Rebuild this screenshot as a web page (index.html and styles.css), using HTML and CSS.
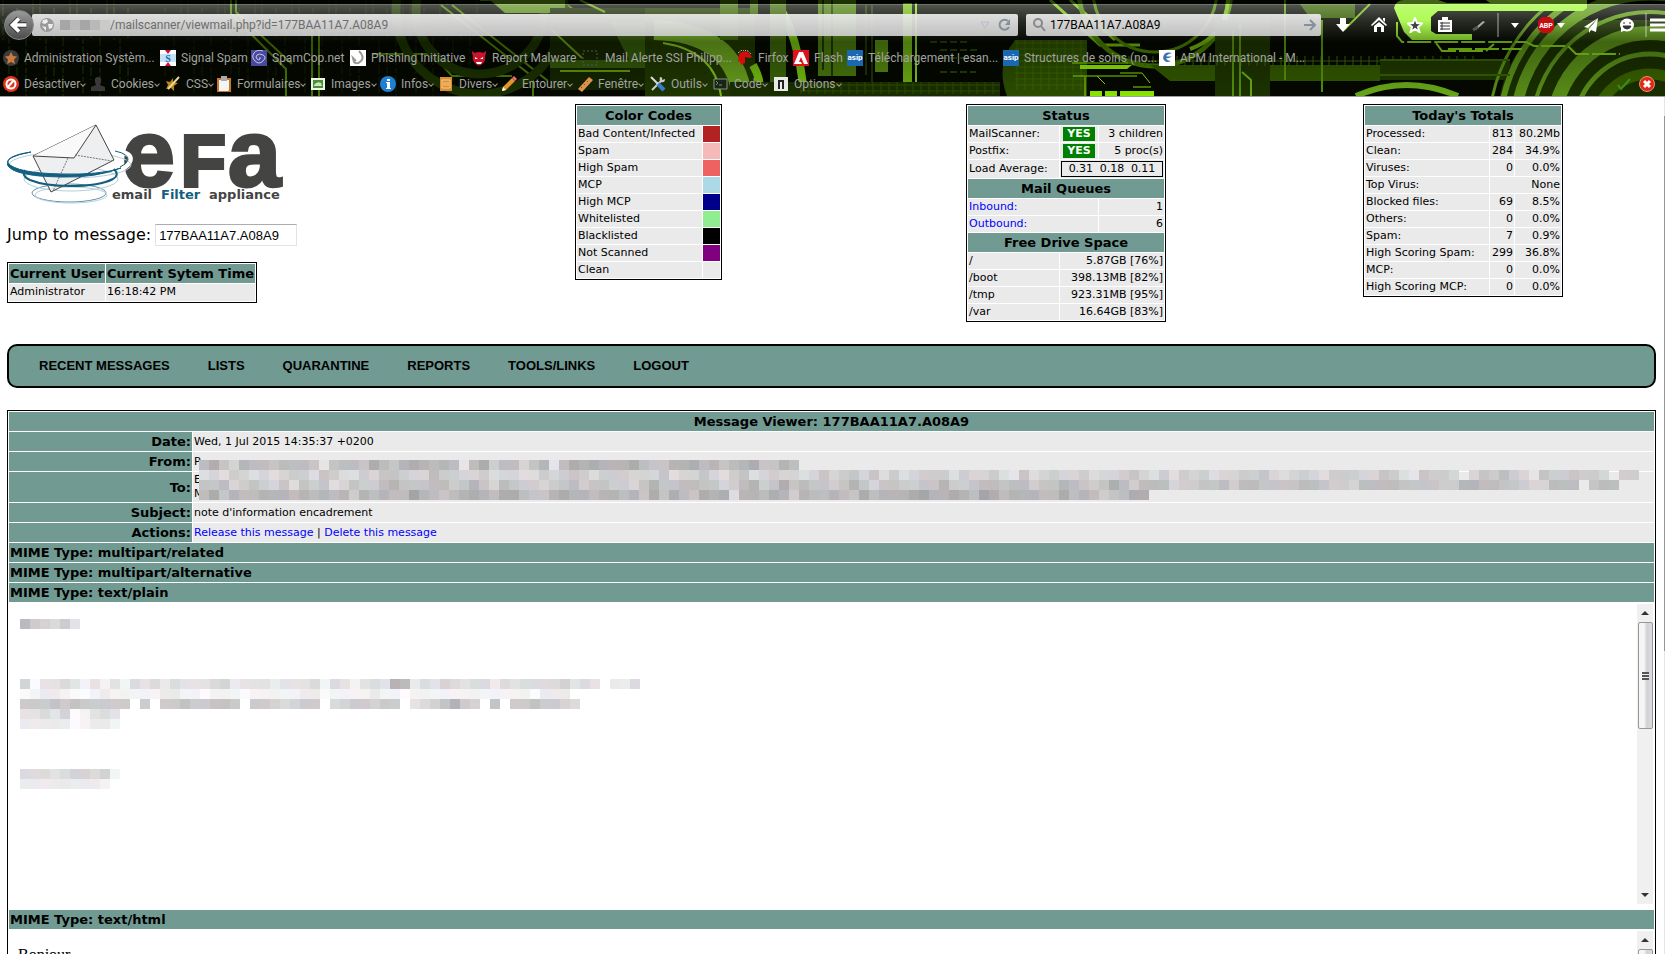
FILE: index.html
```html
<!DOCTYPE html>
<html lang="en">
<head>
<meta charset="utf-8">
<title>MailWatch - Message Viewer</title>
<link rel="stylesheet" href="styles.css">
</head>
<body>
<header class="browser">
  <svg class="theme" viewBox="0 0 1665 96" preserveAspectRatio="xMaxYMin slice" aria-hidden="true">
    <defs>
      <pattern id="rain" width="37" height="96" patternUnits="userSpaceOnUse"><path d="M3 0v40M9 20v76M17 8v30M17 60v20M26 30v66M33 0v22" stroke="#2c5000" stroke-dasharray="5 2 9 3"/></pattern>
      <pattern id="mesh" width="8" height="6" patternUnits="userSpaceOnUse"><path d="M0 1h8M1 0v6" stroke="#3e6c00"/></pattern>
    </defs>
    <rect width="1665" height="96" fill="#050900"/>
    <rect width="130" height="96" fill="url(#rain)" opacity=".7"/>
    <rect x="160" width="320" height="96" fill="url(#rain)" opacity=".35"/>
    <g fill="none" stroke="#4d8200" stroke-width="2">
      <path d="M231 0v14l55 55v27M236 0v12l56 52M312 30v66M319 30v66M441 5l92 72v19M452 5l96 76M480 0h80l20 14v20M372 54h60l20 22h60"/>
    </g>
    <g fill="none" stroke="#1c3400" stroke-width="9"><circle cx="480" cy="10" r="64"/><circle cx="480" cy="10" r="84"/></g>
    <path d="M490 0h75v13h-60z" fill="#5c8f1c"/>
    <path d="M550 8h95v82h-95z" fill="#162800"/>
    <path d="M550 60h180v8H550zM610 22h50v44h-28z" fill="#37600a"/>
    <path d="M645 8h110v88H645z" fill="#213b00"/>
    <path d="M552 30l30 28M560 71h70M580 0l25 12" stroke="#6ba30c" fill="none" stroke-width="2"/>
    <path d="M654 30q80 2 88 66" stroke="#71ad1f" stroke-width="20" fill="none"/>
    <path d="M663 43q52 8 58 53" stroke="#8bd01b" stroke-width="2" fill="none"/>
    <path d="M753 65q8 14 8 31M775 0q24 34 29 96" stroke="#7ccb10" stroke-width="8" fill="none"/>
    <path d="M750 0h8v14h-8zM720 0h18v40h-18zM770 0h16v96h-16z" fill="#3f6b08"/>
    <path d="M818 0h38v76h-38z" fill="#4d7f0d"/>
    <path d="M875 40h13v32h-13z" fill="#5a910e"/>
    <path d="M823 0v70M832 0v76M866 5v70M872 5v85" stroke="#203800" stroke-width="2"/>
    <path d="M903 3h9v93h-9z" fill="#76ba14"/><path d="M916 3v93" stroke="#8cdc1a" stroke-width="2"/>
    <path d="M935 35h45M930 42h40M940 50h38M940 58h30M940 72h36" stroke="#4a7b0a" stroke-dasharray="7 3"/>
    <rect x="730" y="82" width="270" height="14" fill="#1c3300"/><rect x="800" y="82" width="200" height="12" fill="url(#mesh)" opacity=".6"/>
    <path d="M1015 40q-20 25-8 56h80V40z" fill="#2f5400"/><rect x="1015" y="40" width="70" height="50" fill="url(#mesh)"/>
    <path d="M1050 0l50 45h40M1070 0l45 40" stroke="#79c50c" fill="none" stroke-width="3"/>
    <g fill="none" stroke="#4b8400"><circle cx="1155" cy="-10" r="76" stroke-width="5"/><circle cx="1155" cy="-10" r="62" stroke-width="3"/><path d="M1228 0q-2 36-38 49" stroke="#76bf0d" stroke-width="4"/></g>
    <path d="M1150 65h230v16h-210zM1300 4h55v14h-45z" fill="#365f00"/>
    <path d="M1215 20h55v76h-55z" fill="#1f3800"/>
    <path d="M1106 56h370v10h-330z" fill="url(#mesh)"/>
    <path d="M1233 30v66M1240 22v74M1322 20v72M1285 0v80" stroke="#5d9d0c" stroke-width="2"/>
    <path d="M1242 72l9 8v16M1370 4l-26 26" stroke="#74b911" fill="none" stroke-width="2"/>
    <path d="M1080 65h52l-5 4h-47zM1090 91h12v5h-12zM1105 91h12v5h-12zM1120 91h34v5h-34z" fill="#9f0"/>
    <path d="M1072 63h56M1073 76h64M1085 77v19M1120 73l22 0 8 10M1097 76l8 8M1133 87h18" stroke="#9f0" fill="none"/>
    <path d="M1380 60h130v20h-130z" fill="#223d00"/>
    <path d="M1356 96q50-22 102 0" stroke="#71b81a" stroke-width="6" fill="none"/>
    <path d="M1500 96q10-60 70-76h95v76z" fill="#1c3400"/>
    <g fill="none" stroke="#619b1a"><circle cx="1650" cy="130" r="161" stroke-width="3"/><circle cx="1650" cy="130" r="150" stroke-width="6"/><circle cx="1650" cy="130" r="135" stroke-width="11"/><circle cx="1650" cy="130" r="118" stroke-width="4"/><circle cx="1650" cy="130" r="97" stroke-width="14"/><circle cx="1650" cy="130" r="76" stroke-width="5"/><circle cx="1650" cy="130" r="56" stroke-width="11" stroke="#3d6900"/></g>
    <path d="M1394 8q2-8 10-8h34l9 3h43l-4-3h101v8l-4 3h-145l-7 6v14l5 3h36v6h-60l-8-8z" fill="#a2fa38"/>
    <path d="M1397 22v14l5 6h124l8 4h34l8 8h44M1436 43l6 8h44l8-7M1448 49h74" stroke="#8fdf17" fill="none" stroke-width="2" stroke-dasharray="24 3"/>
    <path d="M1380 60h130M1380 75h130" stroke="#3b6700" stroke-width="2"/>
  </svg>
  <div class="browser-inner">
    <div class="address-row">
      <button class="back" aria-label="Back"><svg viewBox="0 0 30 30"><path d="M15 8l-7 7 7 7M9 15h14" fill="none" stroke="#333" stroke-width="6"/><path d="M15 8l-7 7 7 7M9 15h14" fill="none" stroke="#fff" stroke-width="4"/></svg></button>
      <label class="field url">
        <svg class="i14" viewBox="0 0 14 14"><circle cx="7" cy="7" r="7" fill="#999"/><path d="M3 2l4-1 1 3-3 2-3-1zM8 6l5 0-1 4-3 1zM2 8l4 1 0 4z" fill="#eee"/></svg>
        <svg class="host" viewBox="0 0 50 10"><path fill="#b9b9b9" d="M0 0h50v10H0z"/><path fill="#a6a6a6" d="M0 0h10v10H0zM20 0h10v10H20z"/><path fill="#cacaca" d="M40 0h10v10H40z"/></svg>
        <input value="/mailscanner/viewmail.php?id=177BAA11A7.A08A9" aria-label="Address">
        <svg class="i14" viewBox="0 0 14 14"><path d="M3 4h8l-4 6z" fill="none" stroke="#b5bccb"/></svg>
        <svg class="i14" viewBox="0 0 14 14"><path d="M11 9a5 5 0 1 1-1-6" fill="none" stroke="#84909a" stroke-width="2"/><path d="M12 1v6H7z" fill="#84909a"/></svg>
      </label>
      <label class="field search">
        <svg class="i14" viewBox="0 0 14 14"><circle cx="6" cy="5" r="4" fill="none" stroke="#888" stroke-width="2"/><path d="M9 8l4 5" stroke="#888" stroke-width="2"/></svg>
        <input value="177BAA11A7.A08A9" aria-label="Search">
        <svg class="i14" viewBox="0 0 14 14"><path d="M1 7h10M7 2l5 5-5 5" fill="none" stroke="#84909a" stroke-width="2"/></svg>
      </label>
      <nav class="tools" aria-label="Toolbar">
        <button aria-label="Downloads"><svg viewBox="0 0 16 16"><path d="M5 1h6v6h4l-7 8-7-8h4z" fill="#fff"/></svg></button>
        <button class="home" aria-label="Home"><svg viewBox="0 0 16 16"><path d="M8 0l8 8-1 1-7-6-7 6-1-1zM8 5l5 4v6H10v-5H6v5H3V9zM12 1h2v4l-2-2z" fill="#fff"/></svg></button>
        <button class="star" aria-label="Bookmark"><svg viewBox="0 0 16 16"><path d="M8 1l2 5 5 .5-4 3.500 1.500 5L8 12l-4.500 3 1.500-5-4-3.500L6 6z" fill="#444" stroke="#fff" stroke-width="2"/></svg></button>
        <button aria-label="Bookmark list"><svg viewBox="0 0 16 16"><path d="M5 0h6v3h4v12H1V3h4z" fill="#fff"/><path d="M3 6h10M3 9h10M3 12h10M5 5v8" stroke="#333"/></svg></button>
        <button class="pen" aria-label="Edit"><svg viewBox="0 0 16 16"><path d="M3 12L12 4l2 1-9 8z" fill="#aaa"/><path d="M2 13l5-3" stroke="#555" stroke-width="3"/></svg></button>
        <span class="rule"></span>
        <button class="caret" aria-label="More"><svg viewBox="0 0 8 8"><path d="M0 2h8L4 7z" fill="#fff"/></svg></button>
        <button class="abp" aria-label="Adblock"><svg viewBox="0 0 18 18"><path d="M5 1h8l4 4v8l-4 4H5l-4-4V5z" fill="#c70d12"/><text x="9" y="12" text-anchor="middle" class="abp-text">ABP</text></svg></button>
        <button class="caret near" aria-label="Adblock menu"><svg viewBox="0 0 8 8"><path d="M0 2h8L4 7z" fill="#fff"/></svg></button>
        <button class="send" aria-label="Send"><svg viewBox="0 0 16 16"><path d="M15 1L1 10l4 1zM15 1L6 12v4l2-3 5 2z" fill="#fff"/></svg></button>
        <button class="chat" aria-label="Chat"><svg viewBox="0 0 16 16"><ellipse cx="8" cy="8" rx="7" ry="6.500" fill="#fff"/><path d="M2 10v5l5-2z" fill="#fff"/><path d="M5 5v2M11 5v2M4 9h8q-1 3-4 3t-4-3z" fill="#333" stroke="#333"/></svg></button>
        <span class="rule"></span>
        <button aria-label="Menu"><svg viewBox="0 0 16 16"><path d="M1 3h15M1 8h15M1 13h15" stroke="#fff" stroke-width="3"/></svg></button>
      </nav>
    </div>
    <nav class="bar bookmarks" aria-label="Bookmarks">
      <a href="#"><svg viewBox="0 0 16 16"><circle cx="8" cy="8" r="8" fill="#3b3b3b"/><path d="M8 2l2 4 4 .5-3 3 1 4.500-4-2-4 2 1-4.500-3-3L6 6z" fill="#c77b3c"/></svg>Administration Systèm...</a>
      <a href="#"><svg viewBox="0 0 16 16"><path fill="#fff" d="M0 0h16v16H0z"/><path d="M0 4h16v8H0z" fill="#c4e2f4"/><path d="M5 0h6L8 4zM5 16h6l-3-4z" fill="#cc1040"/><text x="8" y="12" text-anchor="middle" class="s-text">S</text></svg>Signal Spam</a>
      <a href="#"><svg viewBox="0 0 16 16"><path fill="#4a4a9c" d="M0 0h16v16H0z"/><path d="M8 8q2-1 1 1t-3 0 0-4 6 0 0 6-8 0-1-8 9-2" fill="none" stroke="#c5c5f2"/></svg>SpamCop.net</a>
      <a href="#"><svg viewBox="0 0 16 16"><path fill="#fff" d="M0 0h16v16H0z"/><path d="M9 1q6 6 2 10T4 12l-1-4 3 3" fill="none" stroke="#999" stroke-width="2"/></svg>Phishing Initiative</a>
      <a href="#"><svg viewBox="0 0 16 16"><path d="M1 1l3 2q4-2 8 0l3-2q0 4-1 5 1 5-3 8-3 3-6 0-4-3-3-8-1-1-1-5z" fill="#c8142c"/><path d="M4 7l3 2H4zM12 7L9 9h3zM5 12h6l-1 2H6z" fill="#fff"/></svg>Report Malware</a>
      <a href="#"><svg viewBox="0 0 16 16"><path fill="none" stroke="#555" stroke-dasharray="2 2" d="M1 1h14v14H1z"/></svg><span class="indent">Mail Alerte SSI Philipp...</span></a>
      <a href="#"><svg viewBox="0 0 16 16"><path d="M2 4q5-5 10-1l3 4-3 1-4-1v6l-4 2-1-4-2 1z" fill="#d40c0c"/><path d="M1 3l4-3 6 1 3 3" fill="none" stroke="#ddd" stroke-dasharray="1 1"/></svg>Firfox</a>
      <a href="#"><svg viewBox="0 0 16 16"><path fill="#e1121c" d="M0 0h16v16H0z"/><path d="M6 2h4l5 12h-4L8 7l-2 5h2l1 2H1z" fill="#fff"/></svg>Flash</a>
      <a href="#"><svg viewBox="0 0 16 16"><path fill="#1a67b2" d="M0 0h16v16H0z"/><text x="8" y="10" text-anchor="middle" class="asip-text">asip</text></svg>Téléchargement | esan...</a>
      <a href="#"><svg viewBox="0 0 16 16"><path fill="#1a67b2" d="M0 0h16v16H0z"/><text x="8" y="10" text-anchor="middle" class="asip-text">asip</text></svg>Structures de soins (no...</a>
      <a href="#"><svg viewBox="0 0 16 16"><path fill="#fff" d="M0 0h16v16H0z"/><path d="M13 3Q5 1 4 8q2 6 8 3-4 0-5-3 3 1 6-2-3 1-6 0 2-2 6-3z" fill="#3f6fae"/></svg>APM International - M...</a>
    </nav>
    <div class="bar-line">
      <nav class="bar developer" aria-label="Developer">
        <a href="#"><svg viewBox="0 0 16 16"><circle cx="8" cy="8" r="8" fill="#e0341c"/><circle cx="8" cy="8" r="4.500" fill="none" stroke="#fff" stroke-width="2"/><path d="M11 4l-7 8" stroke="#fff" stroke-width="2"/></svg>Désactiver<i></i></a>
        <a href="#"><svg viewBox="0 0 16 16"><path d="M8 1q4 0 3 5l-1 3 5 2v4H1v-4l5-2-1-3q-1-5 3-5z" fill="#383838"/></svg>Cookies<i></i></a>
        <a href="#"><svg viewBox="0 0 16 16"><path d="M1 5l4 1 3-4 0 4 5 1-4 3 0 5-3-3-5 1 2-4z" fill="#b98518"/><path d="M14 1L3 13" stroke="#e8d8a0" stroke-width="2"/></svg>CSS<i></i></a>
        <a href="#"><svg viewBox="0 0 16 16"><path fill="#c8762e" d="M1 2h14v14H1z"/><path fill="#f5f5f5" d="M3 4h10v10l-1 1H3z"/><path fill="#aaa" d="M5 0h6v5H5z"/></svg>Formulaires<i></i></a>
        <a href="#"><svg viewBox="0 0 16 16"><path fill="#eef5e6" d="M1 2h14v12H1z"/><path fill="#4d8f38" d="M3 4h10v8H3z"/><path d="M4 9q3-4 7-2l1 3H4z" fill="#cde3ba"/></svg>Images<i></i></a>
        <a href="#"><svg viewBox="0 0 16 16"><circle cx="8" cy="8" r="8" fill="#1e7fd4"/><path d="M7 3h3v2H7zM6 6h4v6h1v1H6v-1h1V7H6z" fill="#fff"/></svg>Infos<i></i></a>
        <a href="#"><svg viewBox="0 0 16 16"><path fill="#d98c31" d="M2 1h12v14H2z"/><path fill="none" stroke="#f8cf8a" d="M4 4h8v8H4zM5 7h6M5 9h6"/></svg>Divers<i></i></a>
        <a href="#"><svg viewBox="0 0 16 16"><path d="M2 11L11 2l3 3-9 9-4 1z" fill="#e6932f"/><path d="M11 2l2-2 3 3-2 2z" fill="#e76b68"/><path d="M2 11l3 3-4 1z" fill="#fff"/></svg>Entourer<i></i></a>
        <a href="#"><svg viewBox="0 0 16 16"><path d="M1 13L12 1l4 3L5 16z" fill="#db934c"/><path d="M4 11l1 1M7 8l1 1M10 5l1 1" stroke="#885020"/></svg>Fenêtre<i></i></a>
        <a href="#"><svg viewBox="0 0 16 16"><path d="M2 14L12 4" stroke="#ccc" stroke-width="2"/><path d="M10 1q3 0 2 3l3-1q0 4-4 3-2-1-1-5z" fill="#ccc"/><path d="M1 1l7 7" stroke="#ddd" stroke-width="2"/><path d="M8 8l6 6" stroke="#397bd0" stroke-width="4"/></svg>Outils<i></i></a>
        <a href="#"><svg viewBox="0 0 16 16"><path fill="#1a221a" stroke="#889088" d="M1 3h13v10H1z"/><path d="M3 5l2 2-2 2M6 9h3" stroke="#5aa05a" fill="none"/></svg>Code<i></i></a>
        <a href="#"><svg viewBox="0 0 16 16"><path fill="#e8e8e8" d="M1 1h14v14H1z"/><path fill="#222" d="M5 4h6v9H5z"/><path fill="#eee" d="M7 6h2v7H7z"/></svg>Options<i></i></a>
      </nav>
      <svg class="i14" viewBox="0 0 14 14"><path d="M1 8l3 4 9-10" fill="none" stroke="#3d8c17" stroke-width="2"/></svg>
      <button class="close" aria-label="Close"><svg viewBox="0 0 16 16"><circle cx="8" cy="8" r="7.500" fill="#dd2b16" stroke="#f08c78"/><path d="M5 5l6 6M11 5l-6 6" stroke="#fff" stroke-width="3"/></svg></button>
    </div>
  </div>
</header>

<main class="page">
  <section class="top">
    <div class="brand">
      <svg class="logo" viewBox="0 -16 290 102" role="img" aria-label="eFa email Filter appliance">
        <text class="logo-big" x="115" y="66">e</text><text class="logo-cap" x="174" y="66">F</text><text class="logo-big" x="221" y="66">a</text>
        <path d="M108 31q20 2 14 12-3 6-18 10" fill="none" stroke="#fff" stroke-width="5"/>
        <ellipse cx="62" cy="73" rx="37" ry="9" fill="none" stroke="#5e95aa"/><ellipse cx="64" cy="75" rx="36" ry="8" fill="none" stroke="#b7ced8"/>
        <ellipse cx="64" cy="59" rx="47" ry="12" fill="none" stroke="#b7ced8"/>
        <ellipse cx="63" cy="45" rx="61" ry="13" fill="none" stroke="#b7ced8"/>
        <path d="M89 5L26 36l18 36 63-32z" fill="#eeeff1" stroke="#444"/><path d="M26 36l41 2L89 5" fill="#f9f9f9" stroke="#444" stroke-width="1"/>
        <path d="M61 38L46 71M68 35l37 6" stroke="#777" stroke-dasharray="2 1" fill="none"/>
        <path d="M18 50q-4 6 5 10 15 6 40 6 30 0 43-7 7-4 1-10" fill="none" stroke="#135f7f" stroke-width="2"/>
        <path d="M108 31q14 3 13 9-1 4-8 7" fill="none" stroke="#135f7f" stroke-width="1"/>
        <path d="M24 32Q-2 37 1 43q8 10 53 11 40 1 60-6-25 10-60 9Q8 56 1 46-4 36 24 32z" fill="#135f7f" stroke="#135f7f"/>
        <text class="logo-tag" x="105" y="79">email</text><text class="logo-tag blue" x="154" y="79">Filter</text><text class="logo-tag" x="202" y="79">appliance</text>
      </svg>
      <form class="jump"><label for="msg">Jump to message:</label><input id="msg" value="177BAA11A7.A08A9"></form>
      <table class="grid user">
        <tr><th>Current User</th><th>Current Sytem Time</th></tr>
        <tr><td>Administrator</td><td>16:18:42 PM</td></tr>
      </table>
    </div>
    <table class="grid codes">
      <tr><th colspan="2">Color Codes</th></tr>
      <tr><td>Bad Content/Infected</td><td class="sw infected"></td></tr>
      <tr><td>Spam</td><td class="sw spam"></td></tr>
      <tr><td>High Spam</td><td class="sw high-spam"></td></tr>
      <tr><td>MCP</td><td class="sw mcp"></td></tr>
      <tr><td>High MCP</td><td class="sw high-mcp"></td></tr>
      <tr><td>Whitelisted</td><td class="sw white"></td></tr>
      <tr><td>Blacklisted</td><td class="sw black"></td></tr>
      <tr><td>Not Scanned</td><td class="sw unscanned"></td></tr>
      <tr><td>Clean</td><td class="sw"></td></tr>
    </table>
    <table class="grid stats status">
      <colgroup><col class="c-name"><col class="c-mid"><col></colgroup>
      <tr><th colspan="3">Status</th></tr>
      <tr><td>MailScanner:</td><td><b class="yes">YES</b></td><td class="r">3 children</td></tr>
      <tr><td>Postfix:</td><td><b class="yes">YES</b></td><td class="r">5 proc(s)</td></tr>
      <tr><td>Load Average:</td><td colspan="2"><div class="load"><span>0.31</span><span>0.18</span><span>0.11</span></div></td></tr>
      <tr><th colspan="3">Mail Queues</th></tr>
      <tr><td colspan="2"><a href="#">Inbound:</a></td><td class="r">1</td></tr>
      <tr><td colspan="2"><a href="#">Outbound:</a></td><td class="r">6</td></tr>
      <tr><th colspan="3">Free Drive Space</th></tr>
      <tr><td>/</td><td colspan="2" class="r">5.87GB [76%]</td></tr>
      <tr><td>/boot</td><td colspan="2" class="r">398.13MB [82%]</td></tr>
      <tr><td>/tmp</td><td colspan="2" class="r">923.31MB [95%]</td></tr>
      <tr><td>/var</td><td colspan="2" class="r">16.64GB [83%]</td></tr>
    </table>
    <table class="grid stats totals">
      <colgroup><col><col class="c-count"><col class="c-pct"></colgroup>
      <tr><th colspan="3">Today's Totals</th></tr>
      <tr><td>Processed:</td><td class="r">813</td><td class="r">80.2Mb</td></tr>
      <tr><td>Clean:</td><td class="r">284</td><td class="r">34.9%</td></tr>
      <tr><td>Viruses:</td><td class="r">0</td><td class="r">0.0%</td></tr>
      <tr><td>Top Virus:</td><td class="r" colspan="2">None</td></tr>
      <tr><td>Blocked files:</td><td class="r">69</td><td class="r">8.5%</td></tr>
      <tr><td>Others:</td><td class="r">0</td><td class="r">0.0%</td></tr>
      <tr><td>Spam:</td><td class="r">7</td><td class="r">0.9%</td></tr>
      <tr><td>High Scoring Spam:</td><td class="r">299</td><td class="r">36.8%</td></tr>
      <tr><td>MCP:</td><td class="r">0</td><td class="r">0.0%</td></tr>
      <tr><td>High Scoring MCP:</td><td class="r">0</td><td class="r">0.0%</td></tr>
    </table>
  </section>

  <nav class="menu" aria-label="Main">
    <a href="#">RECENT MESSAGES</a><a href="#">LISTS</a><a href="#">QUARANTINE</a><a href="#">REPORTS</a><a href="#">TOOLS/LINKS</a><a href="#">LOGOUT</a>
  </nav>

  <section class="viewer">
    <table class="grid message">
      <colgroup><col class="c-label"><col></colgroup>
      <tr><th colspan="2">Message Viewer: 177BAA11A7.A08A9</th></tr>
      <tr><th class="label">Date:</th><td>Wed, 1 Jul 2015 14:35:37 +0200</td></tr>
      <tr><th class="label">From:</th><td>P</td></tr>
      <tr><th class="label">To:</th><td>E<br>M</td></tr>
      <tr><th class="label">Subject:</th><td>note d'information encadrement</td></tr>
      <tr><th class="label">Actions:</th><td><a href="#">Release this message</a> | <a href="#">Delete this message</a></td></tr>
      <tr><th class="mime" colspan="2">MIME Type: multipart/related</th></tr>
      <tr><th class="mime" colspan="2">MIME Type: multipart/alternative</th></tr>
      <tr><th class="mime" colspan="2">MIME Type: text/plain</th></tr>
      <tr><td class="part" colspan="2">
        <div class="frame">
          <div class="body-plain">
            <svg class="mosaic" data-rows="865463||||||5033431313143424333452333233341431343982435434424344445343.224|0122100121111122110111011111220111121101111111111110222|66676766666.6.66766776.6654566.4566566.3457965.7.6676654|3343501343|2222201221"></svg>
            <svg class="mosaic" data-rows="4443455451|222222221"></svg>
          </div>
          <div class="scroll"><span class="arrow up"></span><span class="thumb"><i></i></span><span class="arrow down"></span></div>
        </div>
      </td></tr>
      <tr><th class="mime" colspan="2">MIME Type: text/html</th></tr>
      <tr><td class="part" colspan="2">
        <div class="frame">
          <div class="body-html">Bonjour,</div>
          <div class="scroll"><span class="arrow up"></span><span class="thumb"><i></i></span><span class="arrow down"></span></div>
        </div>
      </td></tr>
    </table>
    <svg class="mosaic redaction" data-rows="685376656665156658657876761684663571687877786557786756785576|232432323442542243554336443342332243454244433352335324523433235345352423444243342152343342334532424342334453234324443354215443.35464315445443.44|556345435254523544675556645753654434564554435755665534674585655457535544557445665664557654586466634455646655556654436666555544776655433666.566|68576677767676747676697656787688655787767767585865878277687476676586777897787698677766867645688"></svg>
  </section>
</main>
<div class="page-scroll" aria-hidden="true"></div>
<script src="mosaic.js"></script>
</body>
</html>
```
FILE: styles.css
```css
* { box-sizing: border-box; }
body {
  margin: 0;
  height: 100vh;
  overflow: hidden;
  position: relative;
  background: #fff;
  color: #000;
  font-family: Verdana, "DejaVu Sans", sans-serif;
  font-size: 11px;
  line-height: 14px;
}
a { color: #00f; text-decoration: none; }
button { border: 0; padding: 0; background: none; display: flex; }

/* Browser chrome */
.browser {
  position: relative;
  border-bottom: 1px solid #a0a0a0;
  overflow: hidden;
  color: #a2a2a2;
  font: 12px/16px Roboto, sans-serif;
}
.theme { position: absolute; inset: 0; width: 100%; height: 100%; }
.browser-inner {
  position: relative;
  padding: 10px 0 4px;
  background: linear-gradient(rgba(0,0,0,.6) 4px, rgba(255,255,255,.55) 4px, rgba(255,255,255,.3) 5px, rgba(255,255,255,.15) 20px, rgba(0,0,0,.35) 42px, rgba(0,0,0,.1) 100%);
}
.address-row { display: flex; align-items: center; height: 30px; padding: 0 0 0 4px; }
.back {
  width: 30px; height: 30px;
  flex: none;
  border-radius: 50%;
  border: 1px solid #888;
  background: linear-gradient(#9a9a9a, #4c4c4c);
  margin-right: -2px;
  z-index: 1;
}
.field {
  display: flex;
  align-items: center;
  gap: 6px;
  height: 22px;
  background: linear-gradient(rgba(235,235,235,.93), rgba(205,205,205,.93));
  border-radius: 2px;
}
.field input {
  flex: 1;
  min-width: 0;
  border: 0;
  padding: 0;
  background: none;
  font: inherit;
  color: #6d6d6d;
}
.url { flex: 1; padding: 0 6px 0 8px; margin-right: 8px; }
.url input { margin-left: -6px; }
.search { width: 295px; padding: 0 4px 0 6px; gap: 4px; }
.search input { color: #000; }
.i14 { width: 14px; height: 14px; flex: none; }
.host { width: 50px; height: 10px; flex: none; }
.tools { display: flex; align-items: center; flex: none; width: 344px; padding-left: 14px; }
.tools svg { width: 16px; height: 16px; }
.tools button + button { margin-left: 14px; }
.tools .home { margin-left: 20px; }
.tools button.home { margin-left: 20px; }
.tools button.star { margin-left: 20px; }
.tools button.pen { margin-left: 18px; }
.tools .caret { margin-left: 6px; }
.tools .caret svg { width: 8px; height: 8px; }
.tools .abp svg { width: 18px; height: 18px; }
.tools button.abp { margin-left: 18px; }
.tools button.near { margin-left: 2px; }
.tools button.send { margin-left: 18px; }
.tools button.chat { margin-left: 20px; }
.rule { width: 2px; height: 24px; margin: 0 6px 0 10px; background: rgba(255,255,255,.3); }
.rule:last-of-type { margin-right: auto; }
.abp-text { font: bold 7px Roboto, sans-serif; fill: #fff; }
.s-text { font: bold 10px "Liberation Serif", serif; fill: #1170b8; }
.asip-text { font: bold 8px Roboto, sans-serif; fill: #fff; }
.bar { display: grid; align-items: center; padding-left: 3px; }
.bar a { display: flex; align-items: center; gap: 5px; color: inherit; white-space: nowrap; }
.bar svg { width: 16px; height: 16px; flex: none; }
.indent { padding-left: 2px; }
.bookmarks { grid-template-columns: 157px 91px 99px 121px 111px 155px 56px 54px 156px 156px auto; padding-top: 10px; }
.bar-line { display: flex; align-items: center; gap: 8px; padding: 10px 10px 0 0; }
.developer { flex: 1; grid-template-columns: 87px 75px 51px 94px 70px 58px 63px 76px 73px 63px 60px auto; }
.developer i {
  width: 4px; height: 4px;
  margin-left: -4px;
  border: solid #999;
  border-width: 0 1px 1px 0;
  transform: rotate(45deg);
}
.close svg { width: 16px; height: 16px; }

/* Page */
.page { display: flex; flex-direction: column; gap: 22px; padding: 7px 9px 0 7px; }
.top { display: grid; grid-template-columns: 428fr 427fr 408fr 386fr; justify-items: center; align-items: start; }
.brand { justify-self: start; }
.logo { display: block; width: 290px; height: 102px; }
.logo-big { font: bold 95px "Liberation Sans", Arial, sans-serif; fill: #444443; stroke: #444443; stroke-width: 3; }
.logo-cap { font: bold 73px "Liberation Sans", Arial, sans-serif; fill: #444443; stroke: #444443; stroke-width: 4; }
.logo-tag { font: bold 13px "DejaVu Sans", sans-serif; fill: #444443; }
.blue { fill: #135f7f; }
.jump { display: flex; align-items: center; gap: 4px; margin: 18px 0 16px; font-size: 16px; line-height: 20px; }
.jump input {
  width: 142px; height: 22px;
  border: 1px solid #dfe3ea;
  border-top-color: #abadb3;
  padding: 1px 3px;
  font: 13px "Liberation Sans", Arial, sans-serif;
}

.grid { border: 1px solid #000; border-spacing: 1px; background: #fff; }
.grid th { background: #719a93; padding: 1px; font-size: 13px; line-height: 17px; }
.grid td { background: #eaeaea; padding: 1px; }
.grid.user td { padding-bottom: 2px; }
.codes { width: 147px; }
.sw { width: 17px; }
.grid .infected { background: #b22222; }
.grid .spam { background: #f5b9b9; }
.grid .high-spam { background: #ef6262; }
.grid .mcp { background: #add8e6; }
.grid .high-mcp { background: #00008b; }
.grid .white { background: #90ee90; }
.grid .black { background: #000; }
.grid .unscanned { background: #800080; }
.stats { width: 200px; table-layout: fixed; }
.c-name { width: 91px; }
.c-mid { width: 38px; }
.c-count { width: 24px; }
.c-pct { width: 46px; }
.grid .r { text-align: right; white-space: nowrap; }
.yes { display: block; width: 32px; margin: 0 auto; background: green; color: #fff; text-align: center; }
.load { display: flex; justify-content: space-evenly; border: 1px solid #000; }

.menu {
  display: flex;
  align-items: center;
  height: 44px;
  padding: 0 11px;
  border: 2px solid #000;
  border-radius: 10px;
  background: #719a93;
}
.menu a { padding: 0 19px; color: #000; font: bold 13px/18px "Liberation Sans", Arial, sans-serif; }

.viewer { position: relative; }
.message { width: 100%; table-layout: fixed; }
.c-label { width: 183px; }
.message td { height: 19px; }
.message .label { text-align: right; }
.message .mime { text-align: left; }
.message .part { background: #fff; padding: 1px 1px 5px; }
.frame { display: flex; height: 300px; }
.body-plain { flex: 1; padding: 15px 10px; }
.body-plain .mosaic { margin-bottom: 40px; }
.body-html { flex: 1; padding: 14px 8px; font: 16px/20px "Liberation Serif", serif; }
.mosaic { display: block; }
.redaction { position: absolute; left: 192px; top: 50px; }
.scroll { display: flex; flex-direction: column; align-items: center; width: 16px; background: #f0f0f0; }
.arrow { height: 18px; display: flex; align-items: center; }
.arrow::before { content: ""; border: 4px solid transparent; }
.up::before { border-width: 0 4px 4px; border-bottom-color: #333; }
.down::before { border-width: 4px 4px 0; border-top-color: #333; }
.down { margin-top: auto; }
.thumb {
  display: flex; align-items: center; justify-content: center;
  width: 15px; height: 107px;
  border: 1px solid #979797;
  border-radius: 2px;
  background: linear-gradient(90deg, #f5f5f5 40%, #d0d0d6 60%, #dcdce0);
}
.thumb i { width: 7px; height: 8px; background: repeating-linear-gradient(#555 0 2px, #eee 2px 3px); }
.page-scroll {
  position: absolute;
  top: 97px; right: 0; bottom: 0;
  width: 1px;
  background: linear-gradient(#e6e6e6 19px, #969696 19px 554px, #e6e6e6 554px);
}
```
FILE: mosaic.js
```js
// Draws censor blocks: one digit per 10px cell, 0 = lightest, 9 = darkest.
var CELL = 10;
var TINTS = [[0, 0, 2], [1, 0, 0], [0, 1, 1], [2, 0, 1], [0, 0, 0]];
document.querySelectorAll('.mosaic').forEach(function (svg) {
  var rows = svg.dataset.rows.split('|');
  var base = svg.classList.contains('redaction') ? 236 : 250;
  var width = Math.max.apply(null, rows.map(function (r) { return r.length; })) * CELL;
  svg.setAttribute('width', width);
  svg.setAttribute('height', rows.length * CELL);
  rows.forEach(function (row, y) {
    row.split('').forEach(function (c, x) {
      if (c === '.') return;
      var rect = document.createElementNS('http://www.w3.org/2000/svg', 'rect');
      var tint = TINTS[(x * 3 + y * 2) % 5];
      var level = base - c * 8;
      var rgb = tint.map(function (t) { return level + t * 3; });
      rect.setAttribute('x', x * CELL);
      rect.setAttribute('y', y * CELL);
      rect.setAttribute('width', CELL);
      rect.setAttribute('height', CELL);
      rect.setAttribute('fill', 'rgb(' + rgb + ')');
      svg.appendChild(rect);
    });
  });
});
```
